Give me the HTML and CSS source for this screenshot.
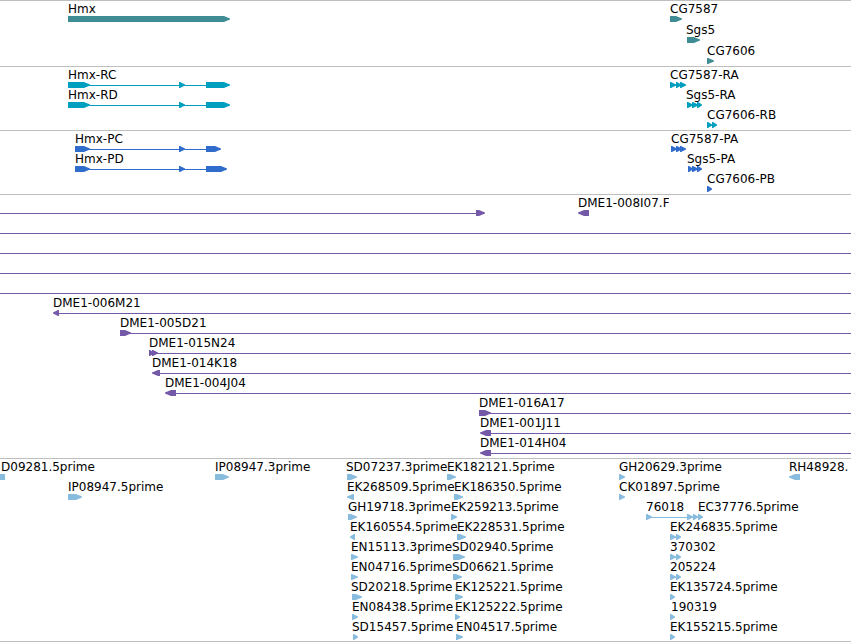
FILE: index.html
```html
<!DOCTYPE html>
<html lang="en">
<head>
    <meta charset="UTF-8">
    <meta name="viewport" content="width=device-width, initial-scale=1.0">
    <title>Genome Browser</title>
    <link rel="stylesheet" href="styles.css">
</head>
<body>
    <main id="browser"></main>
    <script src="script.js"></script>
</body>
</html>
```

FILE: styles.css
```css
body {
    margin: 0;
    background-color: white;
    color: black;
    font-family: "DejaVu Sans", Verdana, sans-serif;
    font-size: 12px;
}

#browser {
    display: flex;
    flex-direction: column;
    overflow: hidden;
    border-bottom: 1px solid #bebebe;
}

.track {
    border-top: 1px solid #bebebe;
    padding-bottom: 3px;
}

.row {
    position: relative;
    height: 20px;
}

.genes .row {
    height: 21px;
}

.genes,
.ests {
    padding-bottom: 2px;
}

.genes {
    color: #408c94;
}

.transcripts {
    color: #009fc0;
}

.proteins {
    color: #306ccc;
}

.clones {
    color: #7459a8;
}

.ests {
    color: #87bcde;
}

/* features sit at their sequence coordinate */
.label {
    position: absolute;
    top: 0;
    line-height: 16px;
    color: black;
    white-space: nowrap;
}

.clipped {
    width: 91px;
    overflow: hidden;
}

.glyphs {
    position: absolute;
    top: 15px;
    left: 0;
    width: 100%;
    height: 6px;
    fill: currentColor;
    overflow: visible;
}
```

FILE: script.js
```js
// feature: [label, label start, exons, intron]
// exon: [start, end, strand], strand 1 = forward, -1 = reverse, 0 = no arrow head
// an intron end of null runs to the edge of the view
const tracks = [
    { name: 'genes', rows: [
        [['Hmx', 68, [[68, 230, 1]]], ['CG7587', 670, [[670, 682, 1]]]],
        [['Sgs5', 686, [[687, 700, 1]]]],
        [['CG7606', 707, [[707, 714, 1]]]]
    ] },
    { name: 'transcripts', rows: [
        [['Hmx-RC', 68, [[68, 90, 1], [179, 185, 1], [206, 230, 1]], [68, 210]],
         ['CG7587-RA', 670, [[670, 676, 1], [676, 681, 1], [680, 686, 1]], [670, 682]]],
        [['Hmx-RD', 68, [[68, 90, 1], [179, 185, 1], [206, 230, 1]], [68, 210]],
         ['Sgs5-RA', 686, [[687, 693, 1], [692, 698, 1], [697, 702, 1]], [687, 698]]],
        [['CG7606-RB', 707, [[707, 712, 1], [712, 717, 1]], [707, 713]]]
    ] },
    { name: 'proteins', rows: [
        [['Hmx-PC', 75, [[75, 90, 1], [179, 185, 1], [206, 221, 1]], [75, 210]],
         ['CG7587-PA', 671, [[671, 677, 1], [676, 682, 1], [680, 686, 1]], [671, 682]]],
        [['Hmx-PD', 75, [[75, 90, 1], [179, 185, 1], [206, 227, 1]], [75, 210]],
         ['Sgs5-PA', 687, [[688, 693, 1], [692, 698, 1], [697, 702, 1]], [688, 698]]],
        [['CG7606-PB', 707, [[707, 712, 1]]]]
    ] },
    { name: 'clones', rows: [
        [['', 0, [[476, 485, 1]], [0, 477]], ['DME1-008I07.F', 578, [[578, 589, -1]]]],
        [['', 0, [], [0, null]]],
        [['', 0, [], [0, null]]],
        [['', 0, [], [0, null]]],
        [['', 0, [], [0, null]]],
        [['DME1-006M21', 53, [[53, 59, -1]], [58, null]]],
        [['DME1-005D21', 120, [[120, 131, 1]], [126, null]]],
        [['DME1-015N24', 149, [[149, 154, 1], [152, 158, 1]], [154, null]]],
        [['DME1-014K18', 152, [[152, 160, -1]], [159, null]]],
        [['DME1-004J04', 165, [[165, 176, -1]], [175, null]]],
        [['DME1-016A17', 479, [[479, 491, 1]], [486, null]]],
        [['DME1-001J11', 480, [[480, 491, -1]], [490, null]]],
        [['DME1-014H04', 480, [[480, 491, -1]], [490, null]]]
    ] },
    { name: 'ests', rows: [
        [['D09281.5prime', 1, [[0, 5, 0]]], ['IP08947.3prime', 215, [[215, 229, 1]]],
         ['SD07237.3prime', 346, [[347, 357, 1]]], ['EK182121.5prime', 447, [[447, 456, 1]]],
         ['GH20629.3prime', 619, [[619, 625, 1]]], ['RH48928.', 789, [[789, 800, -1]]]],
        [['IP08947.5prime', 68, [[68, 82, 1]]], ['EK268509.5prime', 347, [[347, 354, -1]]],
         ['EK186350.5prime', 454, [[454, 463, 1]]], ['CK01897.5prime', 619, [[619, 625, 1]]]],
        [['GH19718.3prime', 348, [[348, 357, 1]]], ['EK259213.5prime', 451, [[451, 457, 1]]],
         ['76018', 646, [[646, 652, 1], [687, 693, 1]], [646, 688]],
         ['EC37776.5prime', 698, [[693, 698, 1], [698, 703, 1]], [690, 699]]],
        [['EK160554.5prime', 350, [[350, 355, -1]]], ['EK228531.5prime', 457, [[457, 466, 1]]],
         ['EK246835.5prime', 670, [[670, 676, 1], [676, 681, 1]], [670, 677]]],
        [['EN15113.3prime', 351, [[351, 358, 1]]], ['SD02940.5prime', 452, [[453, 465, 1]]],
         ['370302', 670, [[670, 676, 1], [676, 681, 1]], [670, 677]]],
        [['EN04716.5prime', 351, [[351, 358, 1]]], ['SD06621.5prime', 452, [[453, 462, 1]]],
         ['205224', 670, [[670, 676, 1], [676, 681, 1]], [670, 677]]],
        [['SD20218.5prime', 351, [[352, 362, 1]]], ['EK125221.5prime', 455, [[455, 463, 1]]],
         ['EK135724.5prime', 670, [[670, 675, 1]]]],
        [['EN08438.5prime', 352, [[352, 358, 1]]], ['EK125222.5prime', 455, [[455, 460, 1]]],
         ['190319', 671, [[670, 675, 1]]]],
        [['SD15457.5prime', 352, [[353, 358, 1]]], ['EN04517.5prime', 456, [[456, 463, 1]]],
         ['EK155215.5prime', 670, [[670, 675, 1]]]]
    ] }
];

const SVG = 'http://www.w3.org/2000/svg';

// arrow heads taper to a blunt tip
function exonPoints(start, end, strand) {
    if (strand === 0) {
        return `${start},0 ${end},0 ${end},6 ${start},6`;
    }
    const head = Math.min(6, end - start - 1);
    if (strand === 1) {
        const neck = end - head;
        return `${start},0 ${neck},0 ${end},2.4 ${end},3.6 ${neck},6 ${start},6`;
    }
    const neck = start + head;
    return `${end},0 ${neck},0 ${start},2.4 ${start},3.6 ${neck},6 ${end},6`;
}

function addFeature(row, svg, [name, labelStart, exons, intron]) {
    if (intron) {
        const line = document.createElementNS(SVG, 'rect');
        line.setAttribute('x', intron[0]);
        line.setAttribute('y', 3);
        line.setAttribute('height', 1);
        line.setAttribute('width', intron[1] === null ? '100%' : intron[1] - intron[0]);
        svg.appendChild(line);
    }
    exons.forEach((exon) => {
        const shape = document.createElementNS(SVG, 'polygon');
        shape.setAttribute('points', exonPoints(...exon));
        svg.appendChild(shape);
    });
    if (name) {
        const label = document.createElement('span');
        label.className = 'label';
        if (name.endsWith('.F')) {
            label.classList.add('clipped');
        }
        label.style.left = labelStart + 'px';
        label.textContent = name;
        row.appendChild(label);
    }
}

function renderTracks() {
    const browser = document.getElementById('browser');
    tracks.forEach((track) => {
        const section = document.createElement('section');
        section.className = 'track ' + track.name;
        track.rows.forEach((features) => {
            const row = document.createElement('div');
            row.className = 'row';
            const svg = document.createElementNS(SVG, 'svg');
            svg.setAttribute('class', 'glyphs');
            row.appendChild(svg);
            features.forEach((feature) => addFeature(row, svg, feature));
            section.appendChild(row);
        });
        browser.appendChild(section);
    });
}

renderTracks();
```
